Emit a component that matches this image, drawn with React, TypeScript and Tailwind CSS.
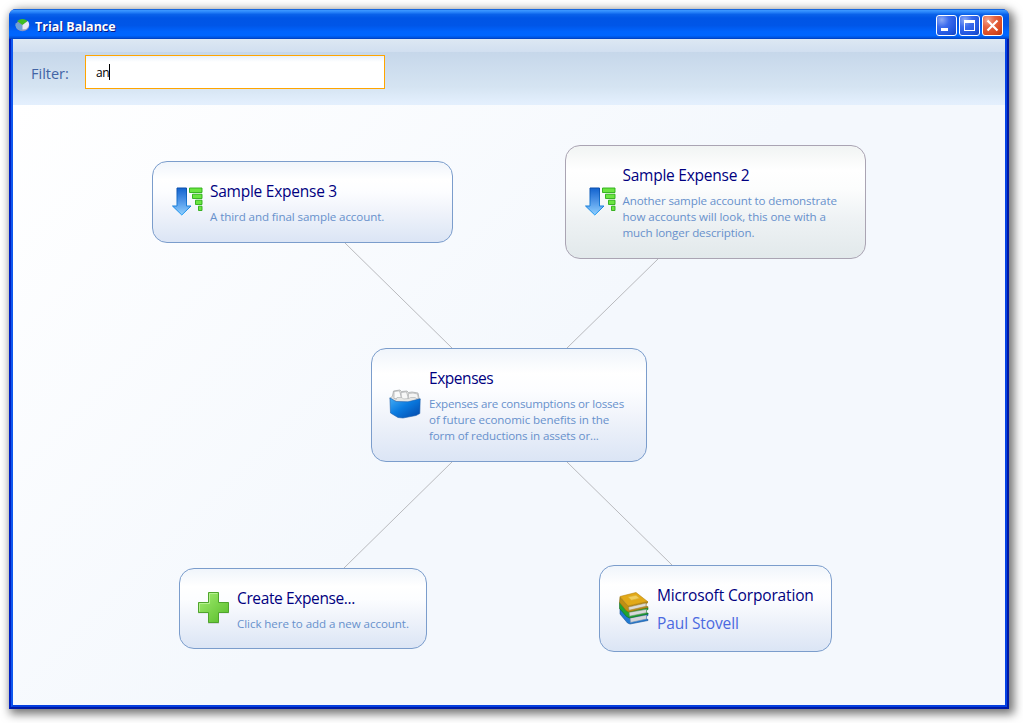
import React, { useId } from "react";

function AppIcon() {
  return (
    <svg className="-mt-[2px] h-[14px] w-[16px] shrink-0" viewBox="0.500 0 16 14">
      <ellipse cx="8" cy="7.6" rx="6.8" ry="5.6" fill="#8f93bd" />
      <path d="M8 7 L1.3 5 A6.8 5.6 0 0 0 8 12.4 Z" fill="#6fa3d8" />
      <path d="M8 7 L2.6 3 Q8 -0.8 13.2 3 Z" fill="#3fbd22" />
      <path d="M8 7 L13.4 3 Q16.6 8 11.5 11.2 L8 11.6 Z" fill="#e9e9f3" />
    </svg>
  );
}

function SortIcon() {
  const id = useId();
  return (
    <svg className="h-8 w-8 overflow-visible" viewBox="0 0.500 32 32">
      <defs>
        <linearGradient id={id + "b"} x1="0" y1="0" x2="0" y2="1">
          <stop offset="0" stopColor="#1263cf" />
          <stop offset="0.5" stopColor="#5197e8" />
          <stop offset="1" stopColor="#8fd0ff" />
        </linearGradient>
        <linearGradient id={id + "s"} x1="0" y1="0" x2="0" y2="1">
          <stop offset="0" stopColor="#0b4dab" />
          <stop offset="1" stopColor="#1e9bf5" />
        </linearGradient>
      </defs>
      <path d="M6 2.500 H15.500 V20.500 H20 L10.800 29.500 L1.500 20.500 H6 Z" fill={`url(#${id}b)`} stroke={`url(#${id}s)`} />
      <g fill="#6be541" stroke="#2bab16" strokeWidth="0.9">
        <path d="M18.5 2.5 h12.500 v4.500 h-12.500z" />
        <path d="M21.5 8.700 h9.500 v4.300 h-9.500z" />
        <path d="M24.5 14.700 h6.500 v4.300 h-6.500z" />
        <path d="M27.5 20.700 h3.500 v4.300 h-3.500z" />
      </g>
    </svg>
  );
}

function FolderBoxIcon() {
  const id = useId();
  return (
    <svg className="h-8 w-8 overflow-visible" viewBox="1 0 32 32">
      <defs>
        <linearGradient id={id} x1="0" y1="0" x2="1" y2="1">
          <stop offset="0" stopColor="#45adf5" />
          <stop offset="0.45" stopColor="#0a7be0" />
          <stop offset="1" stopColor="#0346a8" />
        </linearGradient>
      </defs>
      <path d="M1 9.500 L3.500 7 L4.500 2 L11 1 L12.500 2.500 L18 2 L19.500 3.500 L23 3 L29 4 L30 9 L31 10.500 L28 15 L6 15 Z" fill="#e4e4e2" stroke="#a0a3a5" strokeWidth="0.7" />
      <path d="M5 2.500 L10.500 1.800 L12 7 L12.500 10 L5 9.500 Z" fill="#fafafa" stroke="#a9abad" strokeWidth="0.7" />
      <path d="M12 3.500 L17.500 2.800 L19 8 L18.500 11 L12.500 11 Z" fill="#f7f7f7" stroke="#a9abad" strokeWidth="0.7" />
      <path d="M19.500 4.500 L24 4 L28.500 5 L29.500 10 L19.500 11 Z" fill="#f4f4f3" stroke="#b0b2b4" strokeWidth="0.7" />
      <path d="M6 12.800 L8 8.500 H13 L14.500 10 L20 9.500 L21.500 8.500 H26 L28 9.800 L30 10 L24 12.800 L19 13.500 Z" fill="#e6e6e4" stroke="#b4b7b9" strokeWidth="0.7" />
      <path d="M0.900 8.800 L7 12.500 L19 12.800 L31.200 9.800 L30.800 24.500 L27 26.500 L14 29 L9 28.500 L1.500 24 Z" fill={`url(#${id})`} stroke="#1b5eac" strokeWidth="0.6" />
    </svg>
  );
}

function PlusIcon() {
  const id = useId();
  return (
    <svg className="h-8 w-8 overflow-visible" viewBox="0.500 1.500 32 32">
      <defs>
        <linearGradient id={id} x1="0" y1="0" x2="1" y2="1">
          <stop offset="0" stopColor="#a4ee72" />
          <stop offset="1" stopColor="#56bb28" />
        </linearGradient>
      </defs>
      <path d="M10.500 1.800 H21.500 V11 H31.500 V21.800 H21.500 V32 H10.500 V21.800 H0.500 V11 H10.500 Z" fill="#00000038" />
      <path d="M11 1 H21 V11 H31 V21 H21 V31 H11 V21 H1 V11 H11 Z" fill={`url(#${id})`} stroke="#4fa52c" />
      <path d="M2 20 V12 H12 V2 H20" fill="none" stroke="#b9f295" strokeWidth="0.9" />
    </svg>
  );
}

function BooksIcon() {
  return (
    <svg className="h-8 w-8 overflow-visible" viewBox="0 1 32 32">
      <g strokeLinejoin="round" strokeWidth="0.6">
        <path d="M2 16 L11 25 L30 21.500 V23.500 L28.500 24 V27 L30 27.500 V28.500 L12 32 L9.500 31 L2 22 Z" fill="#2079d2" stroke="#155397" />
        <path d="M12 26 L28.500 23 V27 L12.500 30.500 Z" fill="#d3d4d9" stroke="#6f8fb5" />
        <path d="M1.500 10.500 L10 19 L30 15.500 V17.500 L28.500 18 V21 L30 21 V22 L11.500 26 L8.500 24.500 L1.500 16.500 Z" fill="#1fa531" stroke="#106d1c" />
        <path d="M11 20.300 L28.500 17.300 V20.800 L11.500 24.200 Z" fill="#d8d8da" stroke="#67966c" />
        <path d="M2 5 L10 14 L29.500 9.500 V11 L28 11.500 V14.500 L29.800 14.500 V15.500 L10.500 20 L8 18.500 L1.500 10.500 Z" fill="#c08f13" stroke="#8a690e" />
        <path d="M10.500 15 L28 11 V14.300 L11 18.300 Z" fill="#dddbd5" stroke="#a08a4e" />
        <path d="M2 4.500 L18 0.500 L29.500 9.500 L10 14 Z" fill="#e2a918" stroke="#b58209" />
        <path d="M10 5 L18 3.300 L21.500 6.300 L13.500 8.200 Z" fill="#f0ce5e" stroke="#dcae30" />
      </g>
    </svg>
  );
}

type NodeCardProps = {
  box: string;
  icon: React.ReactNode;
  title: string;
  titleSpacing: string;
  muted?: boolean;
  children: React.ReactNode;
};

function NodeCard({ box, icon, title, titleSpacing, muted, children }: NodeCardProps) {
  const skin = muted
    ? "pl-[17.5px] border-[#aaa4b3] bg-[linear-gradient(#f1f4f3_0%,#ffffff_22%,#fcfdfd_38%,#eef2f4_65%,#e2e9eb_100%)]"
    : "pl-[18px] border-[#7b9dcc] bg-[linear-gradient(#f0f5fb_0%,#ffffff_22%,#fcfdff_38%,#eef2fa_65%,#dbe5f5_100%)]";
  return (
    <div className={`absolute flex items-center rounded-[15px] border ${skin} ${box}`}>
      <div className="w-[39px] shrink-0">{icon}</div>
      <div className="flex flex-col gap-[7px] pt-[2px]">
        <div className={`whitespace-nowrap text-[15.5px] leading-[21px] text-[#000080] ${titleSpacing}`}>{title}</div>
        {children}
      </div>
    </div>
  );
}

function Lines({ rows }: { rows: [string, string][] }) {
  return (
    <div className="text-[11.6px] leading-4 text-[#6891cc]">
      {rows.map(([text, spacing]) => (
        <div key={text} className={`whitespace-nowrap ${spacing}`}>
          {text}
        </div>
      ))}
    </div>
  );
}

const captionButton = "flex h-[21px] w-[21px] items-center justify-center rounded-[3px] border border-white";

export default function App() {
  return (
    <div className="h-[723px] w-[1023px] overflow-hidden bg-white pl-[9px] pt-[9px] font-['Open_Sans','Noto_Sans',sans-serif]">
      <div className="flex h-[700px] w-[1000px] flex-col rounded-t-[7px] bg-[#0831d9] shadow-[3px_3px_10px_2px_rgba(0,0,0,0.55)]">
        <header className="flex h-[30px] shrink-0 items-center rounded-t-[7px] bg-[linear-gradient(#0450cf_0%,#3a95ff_5%,#2a86fb_10%,#0a62ea_18%,#0055e5_30%,#0056e8_55%,#0064fd_75%,#0066ff_88%,#0054e0_95%,#003dbb_100%)] pl-[6px] pr-[6px] pt-[3px]">
          <AppIcon />
          <h1 className="ml-1 grow pt-[2px] text-[12.5px] font-bold leading-5 tracking-[0px] text-white [text-shadow:1px_1px_0_#0a1883]">
            Trial Balance
          </h1>
          <div className="flex gap-[2px]">
            <div className={`${captionButton} bg-[radial-gradient(circle_at_25%_20%,#8caaf6_0%,#3b6bed_35%,#2257e0_70%,#1243c0_100%)]`}>
              <svg className="h-[19px] w-[19px]" viewBox="0 0 19 19">
                <path d="M4 12 h7 v3 h-7z" fill="white" />
              </svg>
            </div>
            <div className={`${captionButton} bg-[radial-gradient(circle_at_25%_20%,#8caaf6_0%,#3b6bed_35%,#2257e0_70%,#1243c0_100%)]`}>
              <svg className="h-[19px] w-[19px]" viewBox="0 0 19 19">
                <path d="M4 4 h11 v11 h-11z M5 7 v7 h9 v-7z" fill="white" fillRule="evenodd" />
              </svg>
            </div>
            <div className={`${captionButton} bg-[radial-gradient(circle_at_25%_20%,#f3a58e_0%,#e56442_35%,#da4a22_70%,#b83511_100%)]`}>
              <svg className="h-[19px] w-[19px]" viewBox="0 0 19 19">
                <path d="M4.500 4.500 L14.500 14.500 M14.500 4.500 L4.500 14.500" stroke="white" strokeWidth="2.2" />
              </svg>
            </div>
          </div>
        </header>
        <div className="flex grow flex-col border-2 border-t-0 border-b-[#001aa5] border-l-[#001fc4] border-r-[#001aa5]">
          <div className="flex grow flex-col border-2 border-t-0 border-b-[#0540e0] border-l-[#0f58ee] border-r-[#0443e6]">
            <div className="flex h-[66px] shrink-0 items-start bg-[linear-gradient(#dde8f3_0px,#d1dff0_13px,#c6d7ea_13px,#d5e4f2_48px,#e3effd_64px,#e4f0fd_66px)] pl-[18px] pt-4">
              <label className="w-[54px] shrink-0 pt-[8px] text-[14.5px] leading-[22px] text-[#4264a5]">Filter:</label>
              <div className="flex h-[34px] w-[300px] items-center border border-[#ffa500] bg-[linear-gradient(#eaf0fa_0px,#ffffff_6px)] pl-[10px] text-[12px] tracking-[-0.3px] text-black">
                <span className="pt-[2px]">an</span>
                <span className="h-4 w-px bg-black" />
              </div>
            </div>
            <main className="relative grow bg-[linear-gradient(135deg,#ffffff_0%,#f4f8fd_50%,#f4f8fd_100%)]">
              <svg className="absolute left-0 top-0 h-[600px] w-[992px]" viewBox="0 0 992 600">
                <path d="M331 137 L440 244 M646 153 L553 244 M440 356 L331 463 M553 356 L659 460" stroke="#b9babe" fill="none" />
              </svg>
              <NodeCard box="left-[139px] top-[56px] h-[82px] w-[301px]" icon={<SortIcon />} title="Sample Expense 3" titleSpacing="tracking-[-0.25px]">
                <Lines rows={[["A third and final sample account.", "tracking-[-0.1px]"]]} />
              </NodeCard>
              <NodeCard muted box="left-[552px] top-[40px] h-[114px] w-[301px]" icon={<SortIcon />} title="Sample Expense 2" titleSpacing="tracking-[-0.25px]">
                <Lines
                  rows={[
                    ["Another sample account to demonstrate", "tracking-[-0.13px]"],
                    ["how accounts will look, this one with a", "tracking-[-0.07px]"],
                    ["much longer description.", "tracking-[-0.12px]"],
                  ]}
                />
              </NodeCard>
              <NodeCard box="left-[358px] top-[243px] h-[114px] w-[276px]" icon={<FolderBoxIcon />} title="Expenses" titleSpacing="tracking-[-0.45px]">
                <Lines
                  rows={[
                    ["Expenses are consumptions or losses", "tracking-[-0.2px]"],
                    ["of future economic benefits in the", "tracking-[-0.09px]"],
                    ["form of reductions in assets or...", "tracking-[-0.14px]"],
                  ]}
                />
              </NodeCard>
              <NodeCard box="left-[166px] top-[463px] h-[81px] w-[248px]" icon={<PlusIcon />} title="Create Expense..." titleSpacing="tracking-[-0.38px]">
                <Lines rows={[["Click here to add a new account.", "tracking-[-0.08px]"]]} />
              </NodeCard>
              <NodeCard box="left-[586px] top-[460px] h-[87px] w-[233px]" icon={<BooksIcon />} title="Microsoft Corporation" titleSpacing="tracking-[-0.15px]">
                <div className="whitespace-nowrap text-[15.5px] leading-[21px] tracking-[-0.1px] text-[#4b69e0]">Paul Stovell</div>
              </NodeCard>
            </main>
          </div>
        </div>
      </div>
    </div>
  );
}
